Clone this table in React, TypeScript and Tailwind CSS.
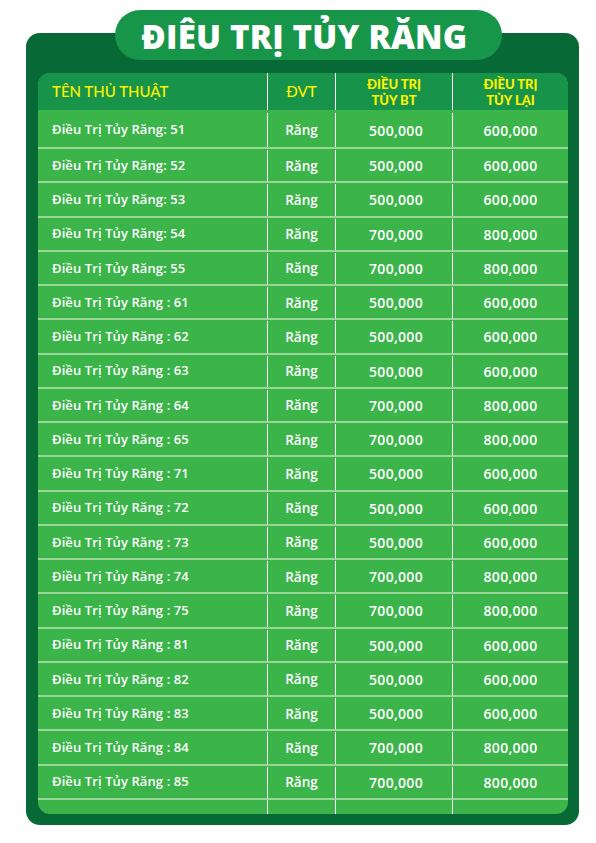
const rows = [
  ['Điều Trị Tủy Răng: 51', '500,000', '600,000'],
  ['Điều Trị Tủy Răng: 52', '500,000', '600,000'],
  ['Điều Trị Tủy Răng: 53', '500,000', '600,000'],
  ['Điều Trị Tủy Răng: 54', '700,000', '800,000'],
  ['Điều Trị Tủy Răng: 55', '700,000', '800,000'],
  ['Điều Trị Tủy Răng : 61', '500,000', '600,000'],
  ['Điều Trị Tủy Răng : 62', '500,000', '600,000'],
  ['Điều Trị Tủy Răng : 63', '500,000', '600,000'],
  ['Điều Trị Tủy Răng : 64', '700,000', '800,000'],
  ['Điều Trị Tủy Răng : 65', '700,000', '800,000'],
  ['Điều Trị Tủy Răng : 71', '500,000', '600,000'],
  ['Điều Trị Tủy Răng : 72', '500,000', '600,000'],
  ['Điều Trị Tủy Răng : 73', '500,000', '600,000'],
  ['Điều Trị Tủy Răng : 74', '700,000', '800,000'],
  ['Điều Trị Tủy Răng : 75', '700,000', '800,000'],
  ['Điều Trị Tủy Răng : 81', '500,000', '600,000'],
  ['Điều Trị Tủy Răng : 82', '500,000', '600,000'],
  ['Điều Trị Tủy Răng : 83', '500,000', '600,000'],
  ['Điều Trị Tủy Răng : 84', '700,000', '800,000'],
  ['Điều Trị Tủy Răng : 85', '700,000', '800,000'],
];

const cols = 'grid grid-cols-[229px_68px_117px_116px]';

export default function App() {
  return (
    <div className="w-[596px] h-[843px] bg-white pt-[10px] font-['Open_Sans',sans-serif]">
      {/* Title pill */}
      <div className="relative z-10 ml-[115px] w-[387px] h-[50px] rounded-full bg-[#179548] flex items-center justify-center pr-[8px]">
        <h1 className="text-white text-[33px] font-extrabold tracking-[0.2px] leading-none pt-[2px]">
          ĐIÊU TRỊ TỦY RĂNG
        </h1>
      </div>

      {/* Dark panel */}
      <div className="-mt-[27px] ml-[26px] w-[553px] h-[792px] rounded-[14px] bg-[#066936] pt-[40px] pl-[12px] pr-[11px] pb-[11px]">
        <div className="w-[530px] rounded-[12px] overflow-hidden bg-[#3bb44a]">
          {/* Header */}
          <div className={`${cols} h-[37px] bg-[#17944a] text-[#fff200] font-['Lato',sans-serif]`}>
            <div className="flex items-center pl-[14px] text-[15px] font-medium">TÊN THỦ THUẬT</div>
            <div className="flex items-center justify-center border-l border-white text-[15px] font-medium">ĐVT</div>
            <div className="flex flex-col items-center justify-center border-l border-white text-[13px] font-black leading-[16px]">
              <span>ĐIỀU TRỊ</span>
              <span>TỦY BT</span>
            </div>
            <div className="flex flex-col items-center justify-center border-l border-white text-[13px] font-black leading-[16px]">
              <span>ĐIỀU TRỊ</span>
              <span>TỦY LẠI</span>
            </div>
          </div>

          {/* Body */}
          {rows.map(([name, bt, lai], i) => (
            <div
              key={name}
              className={`${cols} ${i === 0 ? 'h-[39px] pt-[3px]' : 'h-[34.25px] pt-[1px]'} border-b-2 border-[#9bd699] text-white font-semibold`}
            >
              <div className="flex items-center pl-[14px] text-[13px] tracking-[0.1px]">{name}</div>
              <div className="flex items-center justify-center border-l border-white text-[13.5px]">Răng</div>
              <div className="flex items-center justify-center border-l border-white text-[14px] tracking-[0.3px] pl-[4px]">{bt}</div>
              <div className="flex items-center justify-center border-l border-white text-[14px] tracking-[0.3px]">{lai}</div>
            </div>
          ))}
          <div className={`${cols} h-[14px]`}>
            <div />
            <div className="border-l border-white" />
            <div className="border-l border-white" />
            <div className="border-l border-white" />
          </div>
        </div>
      </div>
    </div>
  );
}
